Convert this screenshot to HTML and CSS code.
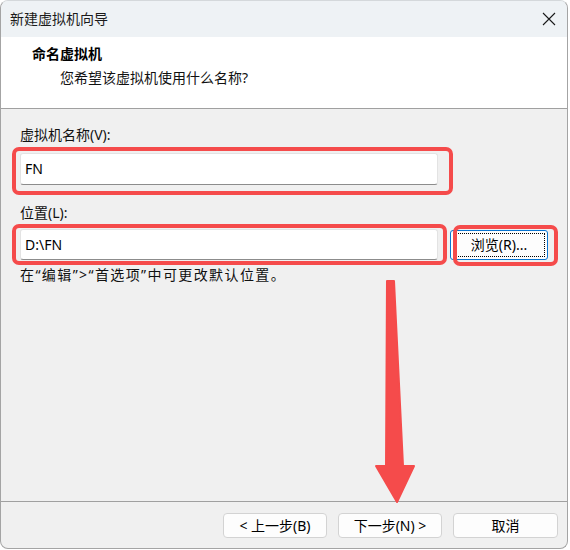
FILE: index.html
```html
<!DOCTYPE html>
<html lang="zh-CN">
<head>
<meta charset="utf-8">
<title>新建虚拟机向导</title>
<link rel="stylesheet" href="styles.css">
</head>
<body>
<div class="window">
  <div class="titlebar">
    <span class="title">新建虚拟机向导</span>
    <svg class="close" width="14" height="14" viewBox="0 0 14 14">
      <path d="M1 1 L13 13 M13 1 L1 13" stroke="#1a1a1a" stroke-width="1.1" fill="none"/>
    </svg>
  </div>
  <div class="header">
    <div class="heading">命名虚拟机</div>
    <div class="subtitle">您希望该虚拟机使用什么名称?</div>
  </div>
  <div class="content">
    <label class="label">虚拟机名称(V):</label>
    <div class="input wide">FN</div>
    <label class="label second">位置(L):</label>
    <div class="row">
      <div class="input">D:\FN</div>
      <button class="browse"><span class="focus">浏览(R)...</span></button>
    </div>
    <div class="hint">在“编辑”&gt;“首选项”中可更改默认位置。</div>
  </div>
  <div class="footer">
    <button class="btn">&lt; 上一步(B)</button>
    <button class="btn">下一步(N) &gt;</button>
    <button class="btn cancel">取消</button>
  </div>
</div>

<!-- red annotation marks drawn over the dialog -->
<div class="mark mark-name"></div>
<div class="mark mark-path"></div>
<div class="mark mark-browse"></div>
<svg class="arrow" width="570" height="550" viewBox="0 0 570 550">
  <polygon points="387,281 394,281 403,466 414,466 397,502 376,466 386,466"
           fill="#f54b4b" stroke="#f54b4b" stroke-width="2" stroke-linejoin="round"/>
</svg>
</body>
</html>
```

FILE: styles.css
```css
body {
  margin: 0;
  width: 570px;
  height: 550px;
  position: relative;
  overflow: hidden;
  background: #ffffff;
  font-family: "Noto Sans", "Noto Sans CJK SC", sans-serif;
  font-size: 14px;
  line-height: 20px;
  color: #111;
}

.window {
  box-sizing: border-box;
  width: 568px;
  height: 549px;
  border: 1px solid #a4a4a4;
  border-top-color: #d4d8db;
  border-radius: 8px;
  background: #f0f0f0;
  display: flex;
  flex-direction: column;
  overflow: hidden;
}

.titlebar {
  height: 36px;
  flex: none;
  background: #eef2f5;
  display: flex;
  align-items: center;
  justify-content: space-between;
  padding: 0 11px 0 9px;
}

.title {
  color: #1a1a1a;
}

.close {
  display: block;
}

.header {
  flex: none;
  height: 72px;
  box-sizing: border-box;
  background: #ffffff;
  border-bottom: 1px solid #a0a0a0;
  padding: 7px 0 0 31px;
}

.heading {
  font-weight: 700;
  color: #000;
}

.subtitle {
  margin-top: 4px;
  padding-left: 28px;
  color: #111;
}

.content {
  display: flex;
  flex-direction: column;
  align-items: flex-start;
  padding: 16px 0 0 19px;
}

.label {
  display: block;
}

.label.second {
  margin-top: 18px;
}

.input {
  box-sizing: border-box;
  width: 418px;
  height: 31px;
  background: #ffffff;
  border: 1px solid #e3e3e3;
  border-bottom-color: #8c8c8c;
  border-radius: 3px;
  padding: 0 4px;
  display: flex;
  align-items: center;
  color: #000;
}

.input.wide {
  height: 32px;
  margin-top: 8px;
}

.row {
  margin-top: 6px;
  display: flex;
  align-items: center;
  gap: 12px;
}

.browse {
  box-sizing: border-box;
  width: 98px;
  height: 30px;
  padding: 2px;
  background: #fdfdfd;
  border: 1px solid #0a74d0;
  border-radius: 3px;
  font: inherit;
  color: #000;
  display: flex;
}

.browse .focus {
  flex: 1;
  border: 1px dotted #000;
  display: flex;
  align-items: center;
  justify-content: center;
}

.hint {
  margin-top: 5px;
  letter-spacing: 1.4px;
}

.footer {
  margin-top: auto;
  flex: none;
  border-top: 1px solid #a0a0a0;
  padding: 11px 9px 10px 0;
  display: flex;
  justify-content: flex-end;
  gap: 11px;
}

.btn {
  box-sizing: border-box;
  width: 104px;
  height: 25px;
  padding: 0;
  background: #fdfdfd;
  border: 1px solid #d3d3d3;
  border-radius: 4px;
  font: inherit;
  line-height: 20px;
  color: #000;
}

.btn.cancel {
  width: 105px;
}

/* annotation marks */
.mark {
  position: absolute;
  box-sizing: border-box;
  border: 4px solid #f54b4b;
  border-radius: 7px;
}

.mark-name {
  left: 12px;
  top: 147px;
  width: 441px;
  height: 48px;
}

.mark-path {
  left: 12px;
  top: 224px;
  width: 435px;
  height: 41px;
}

.mark-browse {
  left: 453px;
  top: 225px;
  width: 105px;
  height: 41px;
}

.arrow {
  position: absolute;
  left: 0;
  top: 0;
  pointer-events: none;
}
```
